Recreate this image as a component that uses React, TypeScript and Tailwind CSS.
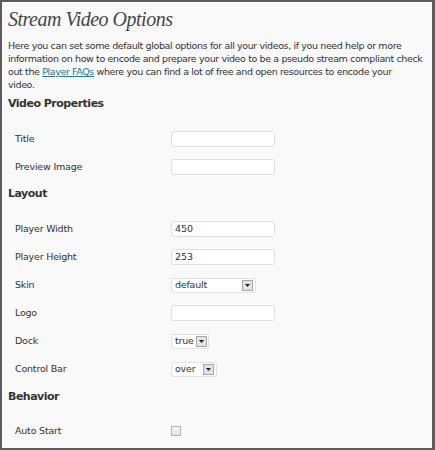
import type { ReactNode } from 'react';

const body = { fontFamily: '"DejaVu Sans", Verdana, sans-serif' };

function Heading({ children, className = '' }: { children: ReactNode; className?: string }) {
  return (
    <h3 className={`h-[16px] text-[11px] leading-[16px] font-bold text-[#333] tracking-[-0.5px] ${className}`}>{children}</h3>
  );
}

function Row({ label, children }: { label: string; children?: ReactNode }) {
  return (
    <div className="flex h-[28px] items-center">
      <span className="ml-[7px] w-[156px] shrink-0 text-[9.5px] text-[#333] tracking-[-0.2px]">{label}</span>
      {children}
    </div>
  );
}

function TextBox({ value = '' }: { value?: string }) {
  return (
    <div className="flex h-[16px] w-[104px] items-center rounded-[3px] border border-[#dfdfdf] bg-white pl-[3px] text-[9.5px] text-[#333]">
      {value}
    </div>
  );
}

function Select({ value, width }: { value: string; width: string }) {
  return (
    <div className={`flex h-[15px] items-center justify-between gap-[2px] rounded-[2px] border border-[#e3e3e3] bg-white pl-[3px] pr-[2px] text-[9.5px] text-[#333] tracking-[-0.2px] ${width}`}>
      <span>{value}</span>
      <span className="flex h-[11px] w-[11px] shrink-0 items-center justify-center border border-[#a8a8a8] bg-[#e2e2e2]">
        <svg width="5" height="3" viewBox="0 0 5 3">
          <path d="M0 0h5L2.5 3z" fill="#222" />
        </svg>
      </span>
    </div>
  );
}

export default function App() {
  return (
    <div className="h-[450px] w-[435px] border-2 border-r-[3px] border-[#5c5c5c] bg-[#f9f9f9] pl-[6px] pr-[4px] pt-[3px]" style={body}>
      <h2 className="h-[28px] text-[20px] leading-[28px] italic tracking-[-0.5px] text-[#464646]" style={{ fontFamily: '"Liberation Serif", Georgia, serif' }}>
        Stream Video Options
      </h2>
      <p className="mt-[6px] text-[9.5px] leading-[13px] text-[#333] tracking-[-0.38px]">
        Here you can set some default global options for all your videos, if you need help or more information on how to encode and prepare your video to be a pseudo stream compliant check out the{' '}
        <a href="#" className="text-[#21759b] underline">Player FAQs</a> where you can find a lot of free and open resources to encode your
        <br />
        video.
      </p>

      <Heading className="mt-[5px]">Video Properties</Heading>
      <div className="mt-[13px]">
        <Row label="Title"><TextBox /></Row>
        <Row label="Preview Image"><TextBox /></Row>
      </div>

      <Heading className="mt-[5px]">Layout</Heading>
      <div className="mt-[13px]">
        <Row label="Player Width"><TextBox value="450" /></Row>
        <Row label="Player Height"><TextBox value="253" /></Row>
        <Row label="Skin"><Select value="default" width="w-[85px]" /></Row>
        <Row label="Logo"><TextBox /></Row>
        <Row label="Dock"><Select value="true" width="w-[38px]" /></Row>
        <Row label="Control Bar"><Select value="over" width="w-[46px]" /></Row>
      </div>

      <Heading className="mt-[6px]">Behavior</Heading>
      <div className="mt-[12px]">
        <Row label="Auto Start">
          <span className="h-[10px] w-[10px] border border-[#b4b4b4] bg-gradient-to-b from-[#f4f4f4] to-[#e4e4e4]" />
        </Row>
      </div>
    </div>
  );
}
